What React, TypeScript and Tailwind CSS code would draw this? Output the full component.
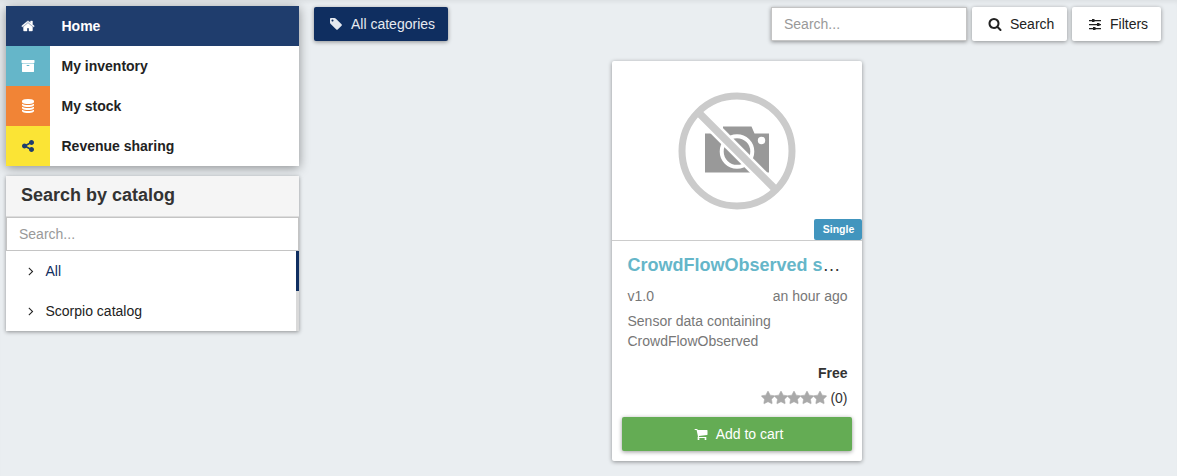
import type { ReactNode } from "react";

const paths = {
  home: "M1472 992v480q0 26-19 45t-45 19h-384v-384h-256v384h-384q-26 0-45-19t-19-45v-480q0-1 .5-3t.5-3l575-474 575 474q1 2 1 6zm223-69l-62 74q-8 9-21 11h-3q-13 0-21-7l-692-577-692 577q-12 8-24 7-13-2-21-11l-62-74q-8-10-7-23.5t11-21.5l719-599q32-26 76-26t76 26l244 204v-195q0-14 9-23t23-9h192q14 0 23 9t9 23v408l219 182q10 8 11 21.5t-7 23.5z",
  archive: "M1088 832q0-26-19-45t-45-19h-256q-26 0-45 19t-19 45 19 45 45 19h256q26 0 45-19t19-45zm576-192v960q0 26-19 45t-45 19h-1408q-26 0-45-19t-19-45v-960q0-26 19-45t45-19h1408q26 0 45 19t19 45zm64-448v256q0 26-19 45t-45 19h-1536q-26 0-45-19t-19-45v-256q0-26 19-45t45-19h1536q26 0 45 19t19 45z",
  database: "M896 768q237 0 443-43t325-127v170q0 69-103 128t-280 93.5-385 34.5-385-34.5-280-93.5-103-128v-170q119 84 325 127t443 43zm0 768q237 0 443-43t325-127v170q0 69-103 128t-280 93.5-385 34.5-385-34.5-280-93.5-103-128v-170q119 84 325 127t443 43zm0-384q237 0 443-43t325-127v170q0 69-103 128t-280 93.5-385 34.5-385-34.5-280-93.5-103-128v-170q119 84 325 127t443 43zm0-1152q208 0 385 34.5t280 93.5 103 128v128q0 69-103 128t-280 93.5-385 34.5-385-34.5-280-93.5-103-128v-128q0-69 103-128t280-93.5 385-34.5z",
  share: "M1344 1024q133 0 226.5 93.5t93.5 226.5-93.5 226.5-226.5 93.5-226.5-93.5-93.5-226.5q0-12 2-34l-360-180q-92 86-218 86-133 0-226.5-93.5t-93.5-226.5 93.5-226.5 226.5-93.5q126 0 218 86l360-180q-2-22-2-34 0-133 93.5-226.5t226.5-93.5 226.5 93.5 93.5 226.5-93.5 226.5-226.5 93.5q-126 0-218-86l-360 180q2 22 2 34t-2 34l360 180q92-86 218-86z",
  tag: "M576 448q0-53-37.5-90.5t-90.5-37.5-90.5 37.5-37.5 90.5 37.5 90.5 90.5 37.5 90.5-37.5 37.5-90.5zm1067 576q0 53-37 90l-491 492q-39 37-91 37-53 0-90-37l-715-716q-38-37-64.5-101t-26.5-117v-416q0-52 38-90t90-38h416q53 0 117 26.5t102 64.5l715 714q37 39 37 91z",
  search: "M1216 832q0-185-131.5-316.5t-316.5-131.5-316.5 131.5-131.5 316.5 131.5 316.5 316.5 131.5 316.5-131.5 131.5-316.5zm512 832q0 52-38 90t-90 38q-54 0-90-38l-343-342q-179 124-399 124-143 0-273.5-55.5t-225-150-150-225-55.5-273.5 55.5-273.5 150-225 225-150 273.5-55.5 273.5 55.5 225 150 150 225 55.5 273.5q0 220-124 399l343 343q37 37 37 90z",
  sliders: "M128 384h384v-128h320v128h832v144h-832v112h-320v-112h-384zM128 896h1024v-128h320v128h192v144h-192v112h-320v-112h-1024zM128 1408h512v-128h320v128h704v144h-704v112h-320v-112h-512z",
  cart: "M704 1536q0 52-38 90t-90 38-90-38-38-90 38-90 90-38 90 38 38 90zm896 0q0 52-38 90t-90 38-90-38-38-90 38-90 90-38 90 38 38 90zm128-1088v512q0 24-16.5 42.5t-40.5 21.5l-1044 122q13 60 13 70 0 16-24 64h920q26 0 45 19t19 45-19 45-45 19h-1024q-26 0-45-19t-19-45q0-11 8-31.5t16-36 21.5-40 15.5-29.5l-177-823h-204q-26 0-45-19t-19-45 19-45 45-19h256q16 0 28.5 6.5t19.5 15.5 13 24.5 8 26 5.5 29.5 4.5 26h1201q26 0 45 19t19 45z",
  star: "M1728 647q0 22-26 48l-363 354 86 500q1 7 1 20 0 21-10.5 35.5t-30.5 14.5q-19 0-40-12l-449-236-449 236q-22 12-40 12-21 0-31.5-14.5t-10.5-35.5q0-6 2-20l86-500-364-354q-25-27-25-48 0-37 56-46l502-73 225-455q19-41 49-41t49 41l225 455 502 73q56 9 56 46z",
  angle: "M1171 960q0 13-10 23l-466 466q-10 10-23 10t-23-10l-50-50q-10-10-10-23t10-23l393-393-393-393q-10-10-10-23t10-23l50-50q10-10 23-10t23 10l466 466q10 10 10 23z",
};

function Icon({ name, className = "" }: { name: keyof typeof paths; className?: string }) {
  return (
    <svg viewBox="0 0 1792 1792" fill="currentColor" className={`size-3.5 shrink-0 ${className}`} aria-hidden="true">
      <path d={paths[name]} />
    </svg>
  );
}

const menu: { label: string; icon: keyof typeof paths; row: string; tile: string }[] = [
  { label: "Home", icon: "home", row: "bg-[#1f3d6d] text-white", tile: "text-white stroke-current stroke-[50]" },
  { label: "My inventory", icon: "archive", row: "bg-white text-[#222]", tile: "bg-[#65b6c9] text-white" },
  { label: "My stock", icon: "database", row: "bg-white text-[#222]", tile: "bg-[#f18436] text-white" },
  { label: "Revenue sharing", icon: "share", row: "bg-white text-[#222]", tile: "bg-[#fbe435] text-[#1f3d6d]" },
];

const catalogs = [
  { label: "All", style: "border-[#0f2e60] text-[#0f2e60]" },
  { label: "Scorpio catalog", style: "border-[#d9d9d9] text-[#222]" },
];

function Button({ icon, className, children }: { icon: keyof typeof paths; className: string; children: ReactNode }) {
  return (
    <button className={`flex h-[34px] items-center rounded-[2px] shadow-[0_1px_4px_rgba(0,0,0,0.4)] ${className}`}>
      <Icon name={icon} />
      <span>{children}</span>
    </button>
  );
}

function NoPicture() {
  return (
    <svg viewBox="0 0 118 118" className="size-[118px]" aria-hidden="true">
      <path fill="#999" d="M27 41.5h18l0-7h28.5l3 7H91V80.500H27z" />
      <circle cx="59" cy="59.500" r="15.300" fill="#999" stroke="#fff" strokeWidth="4" />
      <circle cx="83.500" cy="48.500" r="3.700" fill="#fff" />
      <path d="M20 20L98 98" stroke="#fff" strokeWidth="12.500" />
      <path d="M20 20L98 98" stroke="#cbcbcb" strokeWidth="7.500" />
      <circle cx="59" cy="59" r="55" fill="none" stroke="#cbcbcb" strokeWidth="7" />
    </svg>
  );
}

export default function App() {
  return (
    <div className="flex h-[476px] w-[1177px] overflow-hidden bg-[#eaeef1] font-['Liberation_Sans',Arial,sans-serif] text-sm leading-5 text-[#333] shadow-[inset_0_4px_4px_-2px_rgba(0,0,0,0.06)]">
      <aside className="ml-1.5 mt-1.5 flex w-[293px] shrink-0 flex-col gap-2.5">
        <nav className="shadow-[0_2px_10px_rgba(0,0,0,0.4)]">
          {menu.map((item) => (
            <a key={item.label} className={`flex h-10 items-center font-bold ${item.row}`}>
              <span className={`flex h-full w-11 items-center justify-center ${item.tile}`}>
                <Icon name={item.icon} />
              </span>
              <span className="ml-[11.500px]">{item.label}</span>
            </a>
          ))}
        </nav>
        <section className="bg-white shadow-[0_1px_4px_rgba(0,0,0,0.4)]">
          <h2 className="flex h-[41px] items-center border-b border-[#ddd] bg-[#f5f5f5] pb-0.5 pl-[15px] text-lg font-bold">Search by catalog</h2>
          <input aria-label="Search catalogs" placeholder="Search..." className="block h-[34px] w-full border border-[#c4c4c4] bg-white px-3 placeholder:text-[#999]" />
          {catalogs.map((item) => (
            <a key={item.label} className={`flex h-10 items-center border-r-[3px] pl-[18px] ${item.style}`}>
              <Icon name="angle" className="text-[#222]" />
              <span className="ml-[7.500px]">{item.label}</span>
            </a>
          ))}
        </section>
      </aside>

      <main className="ml-[15px] mr-4 mt-[7px] flex flex-1 flex-col">
        <div className="flex items-start">
          <Button icon="tag" className="w-[134px] gap-2 bg-[#0f2e60] pl-[15px] text-[#e6eaf0]">All categories</Button>
          <input aria-label="Search offerings" placeholder="Search..." className="ml-auto h-[34px] w-[196px] border border-[#c4c4c4] bg-white px-3 shadow-[0_1px_4px_rgba(0,0,0,0.4)] placeholder:text-[#999]" />
          <Button icon="search" className="ml-[5px] w-[95px] gap-2 bg-white pl-4 text-[#222]">Search</Button>
          <Button icon="sliders" className="ml-[5px] w-[89px] gap-2 bg-white pl-4 text-[#222]">Filters</Button>
        </div>

        <article className="ml-[298px] mt-5 flex h-[400px] w-[250px] flex-col rounded-[2px] bg-white shadow-[0_1px_4px_rgba(0,0,0,0.4)]">
          <div className="relative flex h-[180px] shrink-0 items-center justify-center border-b border-[#ccc]">
            <NoPicture />
            <span className="absolute bottom-0 right-0 flex h-[21px] w-12 items-center justify-center rounded-[2px] bg-[#4195be] pb-px pl-px text-[10.500px] font-bold text-white">Single</span>
          </div>
          <div className="pl-[15.500px] pr-[14.500px] pt-[14px]">
            <h3 className="whitespace-nowrap text-lg leading-5"><span className="font-bold text-[#65b6c9]">CrowdFlowObserved s</span>…</h3>
            <div className="mt-[11px] flex justify-between text-[#777]">
              <span>v1.0</span>
              <span>an hour ago</span>
            </div>
            <p className="mt-[5px] h-10 text-[#777]">Sensor data containing CrowdFlowObserved</p>
            <p className="mt-3 text-right font-bold">Free</p>
            <div className="mt-[5px] flex items-center justify-end">
              {[0, 1, 2, 3, 4].map((n) => (
                <Icon key={n} name="star" className="-mr-px stroke-current stroke-[70] text-[#a9a9a9]" />
              ))}
              <span className="ml-[4.500px]">(0)</span>
            </div>
          </div>
          <Button icon="cart" className="mx-2.5 mt-[9px] justify-center gap-2 bg-[#64ac54] pl-[3px] text-white">Add to cart</Button>
        </article>
      </main>
    </div>
  );
}
